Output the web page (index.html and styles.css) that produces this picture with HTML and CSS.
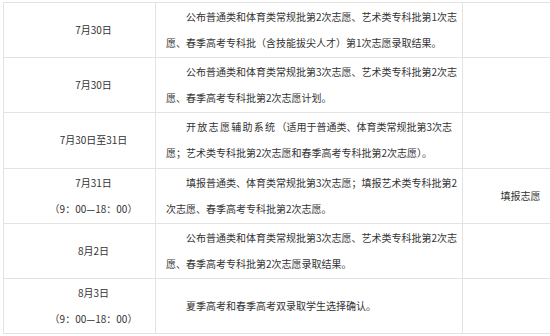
FILE: index.html
```html
<!DOCTYPE html>
<html lang="zh-CN">
<head>
<meta charset="utf-8">
<title>志愿填报时间安排</title>
<link rel="stylesheet" href="styles.css">
</head>
<body>
<table class="sched">
  <colgroup>
    <col class="c-date">
    <col class="c-desc">
    <col class="c-note">
  </colgroup>
  <tbody>
    <tr>
      <td class="date"><p>7月30日</p></td>
      <td class="desc"><p>公布普通类和体育类常规批第2次志愿、艺术类专科批第1次志<br>愿、春季高考专科批（含技能拔尖人才）第1次志愿录取结果。</p></td>
      <td class="note"></td>
    </tr>
    <tr>
      <td class="date"><p>7月30日</p></td>
      <td class="desc"><p>公布普通类和体育类常规批第3次志愿、艺术类专科批第2次志<br>愿、春季高考专科批第2次志愿计划。</p></td>
      <td class="note"></td>
    </tr>
    <tr>
      <td class="date"><p>7月30日至31日</p></td>
      <td class="desc"><p><span class="spaced">开放志愿辅助系统</span>（适用于普通类、体育类常规批第3次志<br>愿；艺术类专科批第2次志愿和春季高考专科批第2次志愿）。</p></td>
      <td class="note"></td>
    </tr>
    <tr>
      <td class="date"><p>7月31日</p><p>（9：00—18：00）</p></td>
      <td class="desc"><p>填报普通类、体育类常规批第3次志愿；填报艺术类专科批第2<br>次志愿、春季高考专科批第2次志愿。</p></td>
      <td class="note"><p>填报志愿</p></td>
    </tr>
    <tr>
      <td class="date"><p>8月2日</p></td>
      <td class="desc"><p>公布普通类和体育类常规批第3次志愿、艺术类专科批第2次志<br>愿、春季高考专科批第2次志愿录取结果。</p></td>
      <td class="note"></td>
    </tr>
    <tr>
      <td class="date"><p>8月3日</p><p>（9：00—18：00）</p></td>
      <td class="desc"><p>夏季高考和春季高考双录取学生选择确认。</p></td>
      <td class="note"></td>
    </tr>
  </tbody>
</table>
</body>
</html>
```

FILE: styles.css
```css
html, body {
  margin: 0;
  padding: 0;
  background: #fff;
}

body {
  padding: 2px 0 0 3px;
  font-family: "Noto Sans CJK SC", "Noto Sans", sans-serif;
  font-size: 10px;
  color: #333;
}

.sched {
  border-collapse: collapse;
  table-layout: fixed;
  width: 547px;
}

.c-date { width: 152px; }
.c-desc { width: 307px; }
.c-note { width: 88px; }

.sched td {
  border: 1px solid #e3e3e3;
  height: 54.2px;
  padding: 0 2px 0 10px;
  vertical-align: middle;
}

.sched p {
  margin: 0;
  line-height: 26px;
  text-indent: 2em;
  white-space: nowrap;
}

.date p,
.note p {
  text-align: center;
}

.desc p {
  text-align: left;
}

.spaced {
  letter-spacing: 1.3px;
}
```
